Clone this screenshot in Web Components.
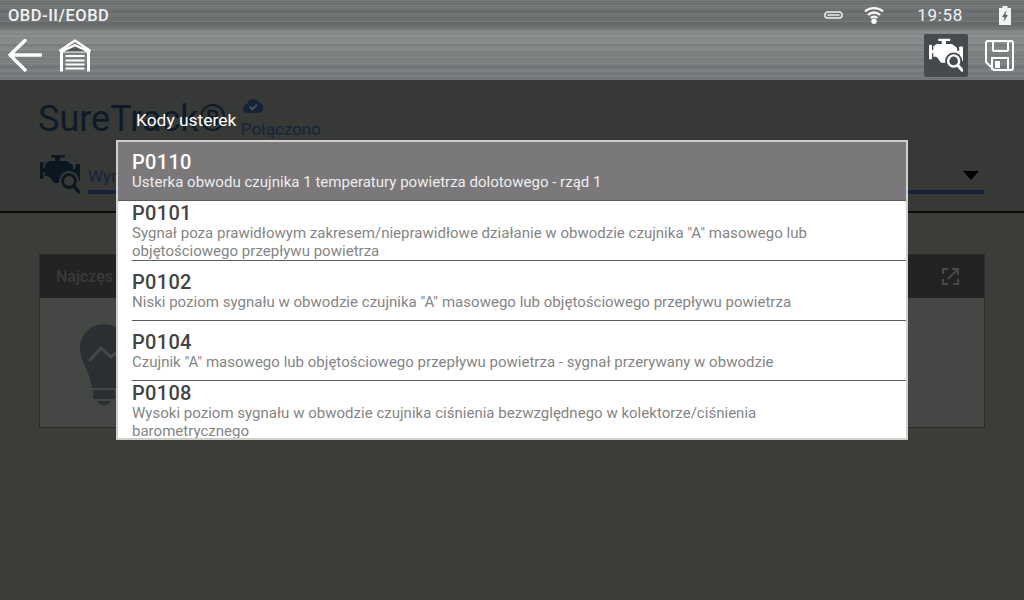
<!DOCTYPE html>
<html>
<head>
<meta charset="utf-8">
<style>
  html, body { margin: 0; height: 100%; }
  body { width: 1024px; height: 600px; overflow: hidden; position: relative; background: #3b3d39; font-family: Roboto, "Liberation Sans", sans-serif; }
  obd-page { height: 600px; }
</style>
</head>
<body>
<obd-page>
  <status-bar slot="top" title-text="OBD-II/EOBD" time="19:58"></status-bar>
  <tool-bar slot="top"></tool-bar>
  <sure-head></sure-head>
  <tip-card label="Najczęs"></tip-card>
</obd-page>
<dtc-dialog heading="Kody usterek">
  <dtc-row code="P0110" selected>Usterka obwodu czujnika 1 temperatury powietrza dolotowego - rząd 1</dtc-row>
  <dtc-row code="P0101">Sygnał poza prawidłowym zakresem/nieprawidłowe działanie w obwodzie czujnika "A" masowego lub objętościowego przepływu powietrza</dtc-row>
  <dtc-row code="P0102">Niski poziom sygnału w obwodzie czujnika "A" masowego lub objętościowego przepływu powietrza</dtc-row>
  <dtc-row code="P0104">Czujnik "A" masowego lub objętościowego przepływu powietrza - sygnał przerywany w obwodzie</dtc-row>
  <dtc-row code="P0108">Wysoki poziom sygnału w obwodzie czujnika ciśnienia bezwzględnego w kolektorze/ciśnienia barometrycznego</dtc-row>
</dtc-dialog>

<script>
// same engine drawing is used in the toolbar and in the page head
const engineIcon = (size, body, bg) => `
  <svg width="${size}" height="${size}" viewBox="0 0 40 40" style="display:block">
    <g fill="${body}">
      <path d="M11 1h14v2.500h-5V7h7l6 4.500V26H15L8 22H5V10l4-3h6V3.500h-4z"/>
      <rect x="0" y="8" width="3.500" height="17" rx="1"/>
      <path d="M3 14h3v4H3zM32 15h4v4h-4z"/>
      <rect x="35.500" y="10" width="4.500" height="17" rx="1"/>
      <path d="M8 20h20v9H14z"/>
    </g>
    <circle cx="29" cy="27" r="10" fill="${bg}"/>
    <circle cx="29" cy="27" r="6.500" fill="none" stroke="${body}" stroke-width="2.800"/>
    <path d="M33.800 32l5.200 6" stroke="${body}" stroke-width="3.400" stroke-linecap="round"/>
  </svg>`;

class ObdPage extends HTMLElement {
  constructor() {
    super();
    this.attachShadow({ mode: "open" }).innerHTML = `
      <style>
        :host { display: flex; flex-direction: column; }
        .metal {
          background:
            repeating-linear-gradient(180deg, rgba(255,255,255,.06) 0 1px, transparent 1px 3px, rgba(0,0,0,.06) 3px 4px, transparent 4px 7px),
            repeating-linear-gradient(180deg, rgba(0,0,0,.05) 0 2px, transparent 2px 5px, rgba(255,255,255,.04) 5px 6px, transparent 6px 11px),
            linear-gradient(180deg, #737677 0, #6a6d6e 29px, #8b8f90 31px, #7c8081 60px, #74787a 80px);
        }
        main { flex: 1; background: #3b3d39; }
      </style>
      <div class="metal"><slot name="top"></slot></div>
      <main><slot></slot></main>`;
  }
}

class StatusBar extends HTMLElement {
  constructor() {
    super();
    this.attachShadow({ mode: "open" }).innerHTML = `
      <style>
        :host { display: flex; align-items: center; height: 30px; padding: 0 13px 0 8px; color: #f2f2f2; font: 500 16.500px Roboto, sans-serif; }
        b { font-weight: 500; flex: 1; letter-spacing: .5px; }
        time { font-size: 17px; font-weight: 400; letter-spacing: .7px; margin: 0 36px 0 33px; }
        svg { display: block; }
        .wifi { margin-left: 21px; }
      </style>
      <b></b>
      <svg width="19" height="8" viewBox="0 0 19 8"><path fill="none" stroke="#f2f2f2" stroke-width="1.500" d="M3 1h13l2 1.500v3L16.500 7h-14L1 5.500v-3z"/><path fill="#f2f2f2" d="M3.500 3h12v2h-12z" opacity=".7"/></svg>
      <svg class="wifi" width="20" height="18" viewBox="0 0 20 18"><g fill="none" stroke="#f8f8f8" stroke-width="2.300"><path d="M1 5.500a13.500 13.500 0 0 1 18 0"/><path d="M4 9a8.500 8.500 0 0 1 12 0"/><path d="M6.800 12a4.500 4.500 0 0 1 6.400 0"/></g><circle cx="10" cy="15.300" r="2.700" fill="#fff"/></svg>
      <time></time>
      <svg width="12" height="19" viewBox="0 0 12 19"><path fill="#f2f2f2" d="M3.500 0h5v2H12v17H0V2h3.500z"/><path fill="#63676a" d="M7.500 4L3 11h2.500L4.500 16 9 9H6.500z"/></svg>`;
    this.shadowRoot.querySelector("b").textContent = this.getAttribute("title-text");
    this.shadowRoot.querySelector("time").textContent = this.getAttribute("time");
  }
}

class ToolBar extends HTMLElement {
  constructor() {
    super();
    this.attachShadow({ mode: "open" }).innerHTML = `
      <style>
        :host { display: flex; align-items: center; height: 50px; padding: 0 10px 0 8px; }
        svg { display: block; }
        .home { margin-left: 17px; }
        .grow { flex: 1; }
        .active { width: 44px; height: 43px; border-radius: 2px; background: #474a4d; display: grid; place-items: center; margin-right: 17px; }
      </style>
      <svg width="34" height="34" viewBox="0 0 34 34"><path fill="none" stroke="#fff" stroke-width="3.400" stroke-linecap="round" stroke-linejoin="round" d="M32.500 17H3M17 2.500L2 17 17 32"/></svg>
      <svg class="home" width="32" height="33" viewBox="0 0 32 33">
        <path fill="none" stroke="#fff" stroke-width="2.200" stroke-linejoin="round" stroke-linecap="round" d="M1.200 11.500L16 1.500 30.800 11.500"/>
        <path fill="#fff" d="M1 11.500L16 5 31 11.500V32.500H28V13.500H4V32.500H1z"/>
        <path fill="#55585a" d="M5 12.500L16 7.500 27 12.500z"/>
        <path fill="none" stroke="#fff" stroke-width="1.800" d="M6.500 17h19M6.500 21.500h19M6.500 25.500h19M6.500 29.500h19"/>
      </svg>
      <div class="grow"></div>
      <div class="active">${engineIcon(34, "#fff", "#474a4d")}</div>
      <svg width="29" height="31" viewBox="0 0 29 31"><path fill="none" stroke="#fff" stroke-width="2" stroke-linejoin="round" d="M3 1h23q2 0 2 2v25q0 2-2 2H9l-8-8V3q0-2 2-2z"/><path fill="none" stroke="#fff" stroke-width="2" d="M8 1v9q0 1 1 1h13q1 0 1-1V1M7 30V18h16v12"/><path fill="#fff" d="M10 21h5v7h-5z"/></svg>`;
  }
}

class SureHead extends HTMLElement {
  constructor() {
    super();
    this.attachShadow({ mode: "open" }).innerHTML = `
      <style>
        :host { display: block; height: 131px; border-bottom: 2px solid #0b0b0b; padding: 0 40px 0 38px; color: #0f1c28; background: #373936; }
        .brand { display: flex; height: 74px; align-items: flex-end; }
        h1 { margin: 0; font: 400 36px/1 Roboto, sans-serif; color: #0d1b28; padding-bottom: 17px; }
        .link { margin-left: 14px; color: #14233a; font: 400 17px/20px Roboto, sans-serif; padding-bottom: 15px; }
        .link svg { display: block; margin: 0 0 6px 2px; }
        .pick { display: flex; align-items: flex-start; padding-left: 2px; }
        .engine { margin: 0 8px 0 0; }
        .field { flex: 1; height: 36px; border-bottom: 4px solid #14233b; font-size: 17px; line-height: 45px; color: #14233a; position: relative; }
        .arrow { position: absolute; right: 5px; top: 17px; width: 0; height: 0; border: 8px solid transparent; border-top: 9px solid #000; border-bottom: 0; }
      </style>
      <div class="brand">
        <h1>SureTrack®</h1>
        <div class="link">
          <svg width="20" height="16" viewBox="0 0 20 16"><path fill="#14233a" d="M5 16a4.500 4.500 0 0 1-1-9 6.500 6.500 0 0 1 12-1.500A5.300 5.300 0 0 1 15 16z"/><path fill="none" stroke="#4b4d4a" stroke-width="2" d="M6.500 9.500l2.800 2.800 4.700-4.700"/></svg>
          Połączono
        </div>
      </div>
      <div class="pick">
        <span class="engine">${engineIcon(40, "#0b1720", "#373936")}</span>
        <div class="field">Wyr<span class="arrow"></span></div>
      </div>`;
  }
}

class TipCard extends HTMLElement {
  constructor() {
    super();
    this.attachShadow({ mode: "open" }).innerHTML = `
      <style>
        :host { display: block; margin: 41px 39px 0 39px; height: 174px; box-sizing: border-box; border: 1px solid #2a2b29; background: #454744; }
        header { height: 43px; background: #222322; display: flex; align-items: center; justify-content: space-between; padding: 0 24px 0 16px; color: #3a3b39; font: 500 16px Roboto, sans-serif; }
        header svg { display: block; }
        .bulb { display: block; margin: 25px 0 0 40px; }
      </style>
      <header><span></span>
        <svg width="19" height="19" viewBox="0 0 19 19"><path fill="none" stroke="#484a48" stroke-width="2" d="M7 2H2v5M2 12v5h5M12 17h5v-5M7 12L17 2M11 2h6v6"/></svg>
      </header>
      <svg class="bulb" width="48" height="84" viewBox="0 0 48 84"><path fill="#2a3031" d="M24 1a24 24 0 0 1 24 24c0 15-10 22-12 40H12C10 47 0 40 0 25A24 24 0 0 1 24 1z"/><path fill="none" stroke="#454744" stroke-width="3" stroke-linecap="round" d="M10 37l11-12 10 9 8-7"/><path fill="#2a3031" d="M15 67h18q2 0 2 2v5q0 2-2 2H15q-2 0-2-2v-5q0-2 2-2zM17 78h14l-4 4h-6z"/></svg>`;
    this.shadowRoot.querySelector("span").textContent = this.getAttribute("label");
  }
}

class DtcDialog extends HTMLElement {
  constructor() {
    super();
    this.attachShadow({ mode: "open" }).innerHTML = `
      <style>
        :host { position: absolute; left: 116px; top: 140px; width: 792px; height: 300px; box-sizing: border-box; border: 2px solid #cfd0cc; background: #fff; }
        h2 { position: absolute; left: 18px; top: -32px; margin: 0; font: 400 17.400px/20px Roboto, sans-serif; color: #fff; white-space: nowrap; }
        .list { height: 100%; overflow: hidden; }
      </style>
      <h2></h2>
      <div class="list"><slot></slot></div>`;
    this.shadowRoot.querySelector("h2").textContent = this.getAttribute("heading");
  }
}

class DtcRow extends HTMLElement {
  constructor() {
    super();
    this.attachShadow({ mode: "open" }).innerHTML = `
      <style>
        :host { display: block; height: 60px; position: relative; background: #fff; color: #444; }
        :host([selected]) { background: #7a787a; height: 58px; margin-bottom: 1px; color: #fff; }
        :host::after { content: ""; position: absolute; left: 14px; right: 0; bottom: 0; height: 1px; background: #5c5c5c; }
        :host([selected])::after { left: 0; bottom: -1px; }
        :host(:last-child)::after { display: none; }
        .in { height: 100%; box-sizing: border-box; padding: 0 14px; display: flex; flex-direction: column; justify-content: center; }
        b { font: 500 20px/23px Roboto, sans-serif; letter-spacing: .3px; }
        p { margin: -1px 0 0; font: 400 15px/18px Roboto, sans-serif; letter-spacing: .02px; color: #858585; padding-right: 80px; }
        :host([selected]) p { color: #eee; }
      </style>
      <div class="in"><b></b><p><slot></slot></p></div>`;
    this.shadowRoot.querySelector("b").textContent = this.getAttribute("code");
  }
}

customElements.define("obd-page", ObdPage);
customElements.define("status-bar", StatusBar);
customElements.define("tool-bar", ToolBar);
customElements.define("sure-head", SureHead);
customElements.define("tip-card", TipCard);
customElements.define("dtc-dialog", DtcDialog);
customElements.define("dtc-row", DtcRow);
</script>
</body>
</html>
